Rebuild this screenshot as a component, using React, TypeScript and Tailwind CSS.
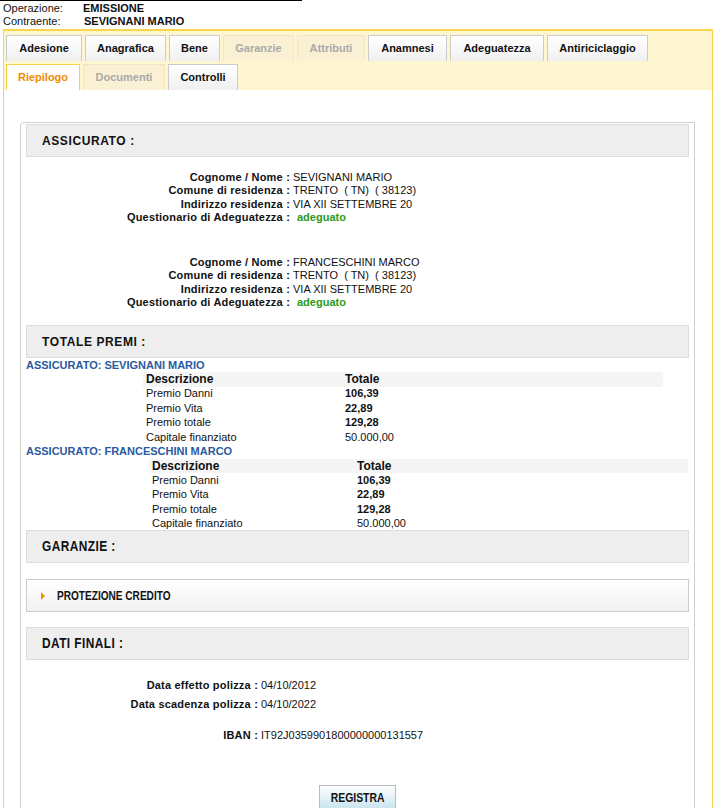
import React from 'react';

type TabState = 'normal' | 'disabled' | 'active';

const Tab = ({ label, w, state = 'normal' }: { label: string; w: string; state?: TabState }) => {
  const styles =
    state === 'active'
      ? 'bg-white border-[#f7d24c] text-[#f08c00]'
      : state === 'disabled'
      ? 'bg-[#faf1d4] border-[#f1e6c2] text-[#a9a9a9]'
      : 'bg-gradient-to-b from-white to-[#f0f0f0] border-[#cccccc] text-[#111111]';
  return (
    <div className={`h-[26px] ${w} flex items-center justify-center border border-b-0 text-[11px] font-bold ${styles}`}>
      {label}
    </div>
  );
};

const SectionHeader = ({ title, narrow }: { title: string; narrow?: boolean }) => (
  <div className="mx-[5px] h-[33px] border border-[#dddddd] bg-[#eeeeee] flex items-center pl-[15px]">
    {narrow ? (
      <span className="inline-block origin-left scale-x-[0.85] font-bold text-[14px] tracking-[0.5px] text-[#111111]">
        {title}
      </span>
    ) : (
      <span className="font-bold text-[12px] tracking-[0.6px] text-[#111111]">{title}</span>
    )}
  </div>
);

const PersonRow = ({ label, value, green }: { label: string; value: string; green?: boolean }) => (
  <div className="flex h-[13.5px] items-center">
    <span className="w-[269px] shrink-0 text-right font-bold tracking-[0.2px] text-[#111111]">{label} :</span>
    {green ? (
      <span className="ml-[7px] font-bold text-[#2c9a1a]">{value}</span>
    ) : (
      <span className="ml-[3px] whitespace-pre text-[#111111]">{value}</span>
    )}
  </div>
);

const Person = ({ name, className }: { name: string; className: string }) => (
  <div className={className}>
    <PersonRow label="Cognome / Nome" value={name} />
    <PersonRow label="Comune di residenza" value="TRENTO  ( TN)  ( 38123)" />
    <PersonRow label="Indirizzo residenza" value="VIA XII SETTEMBRE 20" />
    <PersonRow label="Questionario di Adeguatezza" value="adeguato" green />
  </div>
);

const premi = [
  { d: 'Premio Danni', v: '106,39', b: true },
  { d: 'Premio Vita', v: '22,89', b: true },
  { d: 'Premio totale', v: '129,28', b: true },
  { d: 'Capitale finanziato', v: '50.000,00', b: false },
];

const PremiTable = ({ name, wide }: { name: string; wide?: boolean }) => (
  <div className="leading-none">
    <div className="h-[14px] flex items-center pl-[5px] font-bold text-[#2a5aa0]">ASSICURATO: {name}</div>
    <div className={wide ? 'ml-[128px] w-[539px]' : 'ml-[122px] w-[520px]'}>
      <div className={`grid h-[14.5px] items-center bg-[#f5f5f5] font-bold text-[12px] ${wide ? 'grid-cols-[208px_1fr]' : 'grid-cols-[202px_1fr]'}`}>
        <span className="pl-[3px]">Descrizione</span>
        <span>Totale</span>
      </div>
      {premi.map((r) => (
        <div
          key={r.d}
          className={`grid h-[14.5px] items-center ${wide ? 'grid-cols-[208px_1fr]' : 'grid-cols-[202px_1fr]'}`}
        >
          <span className="pl-[3px]">{r.d}</span>
          <span className={r.b ? 'font-bold' : ''}>{r.v}</span>
        </div>
      ))}
    </div>
  </div>
);

const FinalRow = ({ label, value, className = '' }: { label: string; value: string; className?: string }) => (
  <div className={`flex h-[19px] items-center text-[#111111] ${className}`}>
    <span className="w-[237px] shrink-0 text-right font-bold tracking-[0.2px]">{label} :</span>
    <span className="ml-[3px]">{value}</span>
  </div>
);

export default function App() {
  return (
    <div className="w-[716px] h-[808px] overflow-hidden bg-white font-['Liberation_Sans',Arial,sans-serif] text-[11px] text-[#111111]">
      <div className="w-[302px] border-t border-black" />
      <div className="pl-[3px] pt-[1px]">
        <div className="flex h-[13px] items-center">
          <span className="w-[80px]">Operazione:</span>
          <span className="font-bold">EMISSIONE</span>
        </div>
        <div className="flex h-[13px] items-center">
          <span className="w-[81px]">Contraente:</span>
          <span className="font-bold">SEVIGNANI MARIO</span>
        </div>
      </div>

      <div className="mt-[1px] ml-[3px] w-[710px] border border-t-2 border-[#f9d54a] bg-[#fef6d0]">
        <div className="pt-[4px] pl-[2px] flex flex-col gap-[3px]">
          <div className="flex gap-[3px]">
            <Tab label="Adesione" w="w-[76px]" />
            <Tab label="Anagrafica" w="w-[81px]" />
            <Tab label="Bene" w="w-[51px]" />
            <Tab label="Garanzie" w="w-[71px]" state="disabled" />
            <Tab label="Attributi" w="w-[68px]" state="disabled" />
            <Tab label="Anamnesi" w="w-[79px]" />
            <Tab label="Adeguatezza" w="w-[94px]" />
            <Tab label="Antiriciclaggio" w="w-[101px]" />
          </div>
          <div className="flex gap-[3px]">
            <Tab label="Riepilogo" w="w-[74px]" state="active" />
            <Tab label="Documenti" w="w-[82px]" state="disabled" />
            <Tab label="Controlli" w="w-[70px]" />
          </div>
        </div>

        <div className="bg-white pl-[16px] pr-[17px] pt-[32px] h-[760px]">
          <div className="border border-[#d2d0c2] rounded-tl-[4px] bg-white pt-[1px] pb-[40px]">
            <SectionHeader title="ASSICURATO :" />
            <Person name="SEVIGNANI MARIO" className="mt-[13px]" />
            <Person name="FRANCESCHINI MARCO" className="mt-[31px]" />

            <div className="mt-[16px]">
              <SectionHeader title="TOTALE PREMI :" />
            </div>
            <PremiTable name="SEVIGNANI MARIO" />
            <PremiTable name="FRANCESCHINI MARCO" wide />

            <div className="-mt-[1px]">
              <SectionHeader title="GARANZIE :" narrow />
            </div>

            <div className="mx-[5px] mt-[16px] h-[33px] border border-[#cccccc] bg-gradient-to-b from-white to-[#f1f1f1] flex items-center pl-[14px]">
              <span className="w-0 h-0 border-y-[4px] border-y-transparent border-l-[4px] border-l-[#f29400]" />
              <span className="ml-[12px] inline-block origin-left scale-x-[0.84] font-bold text-[12px] text-[#111111]">
                PROTEZIONE CREDITO
              </span>
            </div>

            <div className="mt-[15px]">
              <SectionHeader title="DATI FINALI :" narrow />
            </div>

            <FinalRow label="Data effetto polizza" value="04/10/2012" className="mt-[16px]" />
            <FinalRow label="Data scadenza polizza" value="04/10/2022" />
            <FinalRow label="IBAN" value="IT92J0359901800000000131557" className="mt-[12px]" />

            <div className="mt-[40px] flex justify-center">
              <button className="w-[77px] h-[26px] flex items-center justify-center border border-[#bbbbbb] bg-gradient-to-b from-white to-[#c6e2ee]">
                <span className="inline-block scale-x-[0.8] font-bold text-[13px] text-[#111111]">REGISTRA</span>
              </button>
            </div>
          </div>
        </div>
      </div>
    </div>
  );
}
